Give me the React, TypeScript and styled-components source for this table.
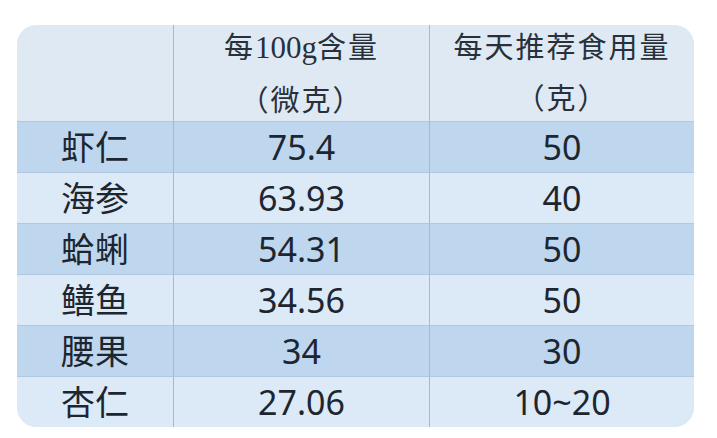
import React from 'react';
import styled, { createGlobalStyle } from 'styled-components';

const GlobalStyle = createGlobalStyle`
  html, body {
    margin: 0;
    padding: 0;
    background: #ffffff;
  }
  body {
    font-family: "Noto Sans", "Noto Sans CJK SC", sans-serif;
    color: #1d2630;
  }
`;

const Page = styled.div`
  width: 717px;
  height: 438px;
  padding: 25px 0 0 17px;
  box-sizing: border-box;
`;

const Table = styled.div`
  width: 677px;
  display: grid;
  grid-template-columns: 156px 256px 1fr;
  grid-template-rows: 96px repeat(6, 51px);
  border-radius: 20px;
  overflow: hidden;
  background: #dde8f4;
`;

type Tone = 'head' | 'dark' | 'light';

const toneBg: Record<Tone, string> = {
  head: '#dee9f4',
  dark: '#bed7ee',
  light: '#dce9f6',
};

const Cell = styled.div<{ $tone: Tone; $divider?: boolean; $rowLine?: boolean }>`
  display: flex;
  align-items: center;
  justify-content: center;
  box-sizing: border-box;
  background: ${(p) => toneBg[p.$tone]};
  border-left: ${(p) => (p.$divider ? '1px solid #a3bad2' : 'none')};
  border-top: ${(p) => (p.$rowLine ? '1px solid #b0c8e0' : 'none')};
  font-size: 34px;
  line-height: 1;
  white-space: nowrap;
`;

const HeadCell = styled(Cell)`
  flex-direction: column;
  justify-content: flex-start;
  gap: 10px;
  font-family: "Noto Sans CJK SC", sans-serif;
  font-size: 29px;
  line-height: 41px;
  letter-spacing: 2px;
  color: #28313b;
`;

const HeadLine = styled.span`
  display: block;
`;

const Digits = styled.span`
  font-family: "Liberation Serif", serif;
  font-size: 31px;
  letter-spacing: 0;
`;

const rows = [
  ['虾仁', '75.4', '50'],
  ['海参', '63.93', '40'],
  ['蛤蜊', '54.31', '50'],
  ['鳝鱼', '34.56', '50'],
  ['腰果', '34', '30'],
  ['杏仁', '27.06', '10~20'],
];

export default function App() {
  return (
    <Page>
      <GlobalStyle />
      <Table>
        <HeadCell $tone="head" />
        <HeadCell $tone="head" $divider>
          <HeadLine>
            每<Digits>100g</Digits>含量
          </HeadLine>
          <HeadLine>（微克）</HeadLine>
        </HeadCell>
        <HeadCell $tone="head" $divider>
          <HeadLine>每天推荐食用量</HeadLine>
          <HeadLine>（克）</HeadLine>
        </HeadCell>
        {rows.map((row, i) => {
          const tone: Tone = i % 2 === 0 ? 'dark' : 'light';
          return row.map((text, j) => (
            <Cell key={`${i}-${j}`} $tone={tone} $divider={j > 0} $rowLine>
              {text}
            </Cell>
          ));
        })}
      </Table>
    </Page>
  );
}
